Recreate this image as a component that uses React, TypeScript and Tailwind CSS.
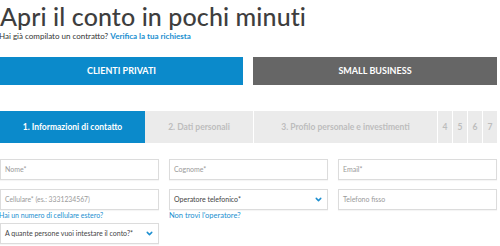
import { ChevronDown } from 'lucide-react';

const font = { fontFamily: 'Lato, "Open Sans", sans-serif' };

function Field({ label, select, small }: { label: string; select?: boolean; small?: boolean }) {
  return (
    <div className="flex h-[21px] items-center justify-between border border-[#dcdcdc] bg-white px-[4px] shadow-[0_1px_1px_rgba(0,0,0,0.04)]">
      <span className={`${small ? 'text-[6.8px]' : 'text-[7px]'} ${select ? 'text-[#444]' : 'text-[#9a9a9a]'}`}>{label}</span>
      {select && <ChevronDown className="h-[9px] w-[9px] text-[#1e8fd0]" strokeWidth={4} />}
    </div>
  );
}

export default function App() {
  return (
    <div className="h-[246px] w-[500px] overflow-hidden bg-white" style={font}>
      {/* intestazione */}
      <h1 className="mt-[2px] text-[25px] leading-[29px] font-medium tracking-[0.1px] text-[#3e3e3e]">
        Apri il conto in pochi minuti
      </h1>
      <p className="ml-[-1px] text-[8px] leading-[10px] text-[#333]">
        Hai già compilato un contratto?{' '}
        <span className="font-bold text-[#1a8fd0]">Verifica la tua richiesta</span>
      </p>

      {/* tipo cliente */}
      <div className="mt-[16px] flex w-[497px] gap-[10px]">
        <div className="flex h-[28px] w-[243px] items-center justify-center bg-[#0b8acb] text-[9px] font-bold text-white">
          CLIENTI PRIVATI
        </div>
        <div className="flex h-[28px] flex-1 items-center justify-center bg-[#666666] text-[9px] font-bold text-white">
          SMALL BUSINESS
        </div>
      </div>

      {/* stepper */}
      <div className="mt-[26px] flex h-[32px] w-[497px] bg-[#ebebeb] text-[8.5px] font-bold">
        <div className="flex w-[145px] items-center justify-center bg-[#0b8acb] text-white">
          1. Informazioni di contatto
        </div>
        <div className="flex w-[108px] items-center justify-center text-[#bdbdbd]">2. Dati personali</div>
        <div className="flex w-[184px] items-center justify-center border-l border-white text-[#bdbdbd]">
          3. Profilo personale e investimenti
        </div>
        {['4', '5', '6', '7'].map((n) => (
          <div key={n} className="flex flex-1 items-center justify-center border-l border-white text-[#bdbdbd]">
            {n}
          </div>
        ))}
      </div>

      {/* form */}
      <div className="mt-[16px] grid w-[497px] grid-cols-3 gap-x-[10px]">
        <Field label="Nome*" />
        <Field label="Cognome*" />
        <Field label="Email*" />
      </div>
      <div className="mt-[9px] grid w-[497px] grid-cols-3 gap-x-[10px]">
        <div>
          <Field label="Cellulare* (es.: 3331234567)" small />
          <p className="ml-[-1px] mt-[1px] text-[7px] leading-[9px] text-[#1a8fd0]">Hai un numero di cellulare estero?</p>
        </div>
        <div>
          <Field label="Operatore telefonico*" select />
          <p className="mt-[1px] text-[7.5px] leading-[9px] text-[#1a8fd0]">Non trovi l'operatore?</p>
        </div>
        <Field label="Telefono fisso" />
      </div>
      <div className="mt-[3px] grid w-[497px] grid-cols-3 gap-x-[10px]">
        <Field label="A quante persone vuoi intestare il conto?*" select />
      </div>
    </div>
  );
}
